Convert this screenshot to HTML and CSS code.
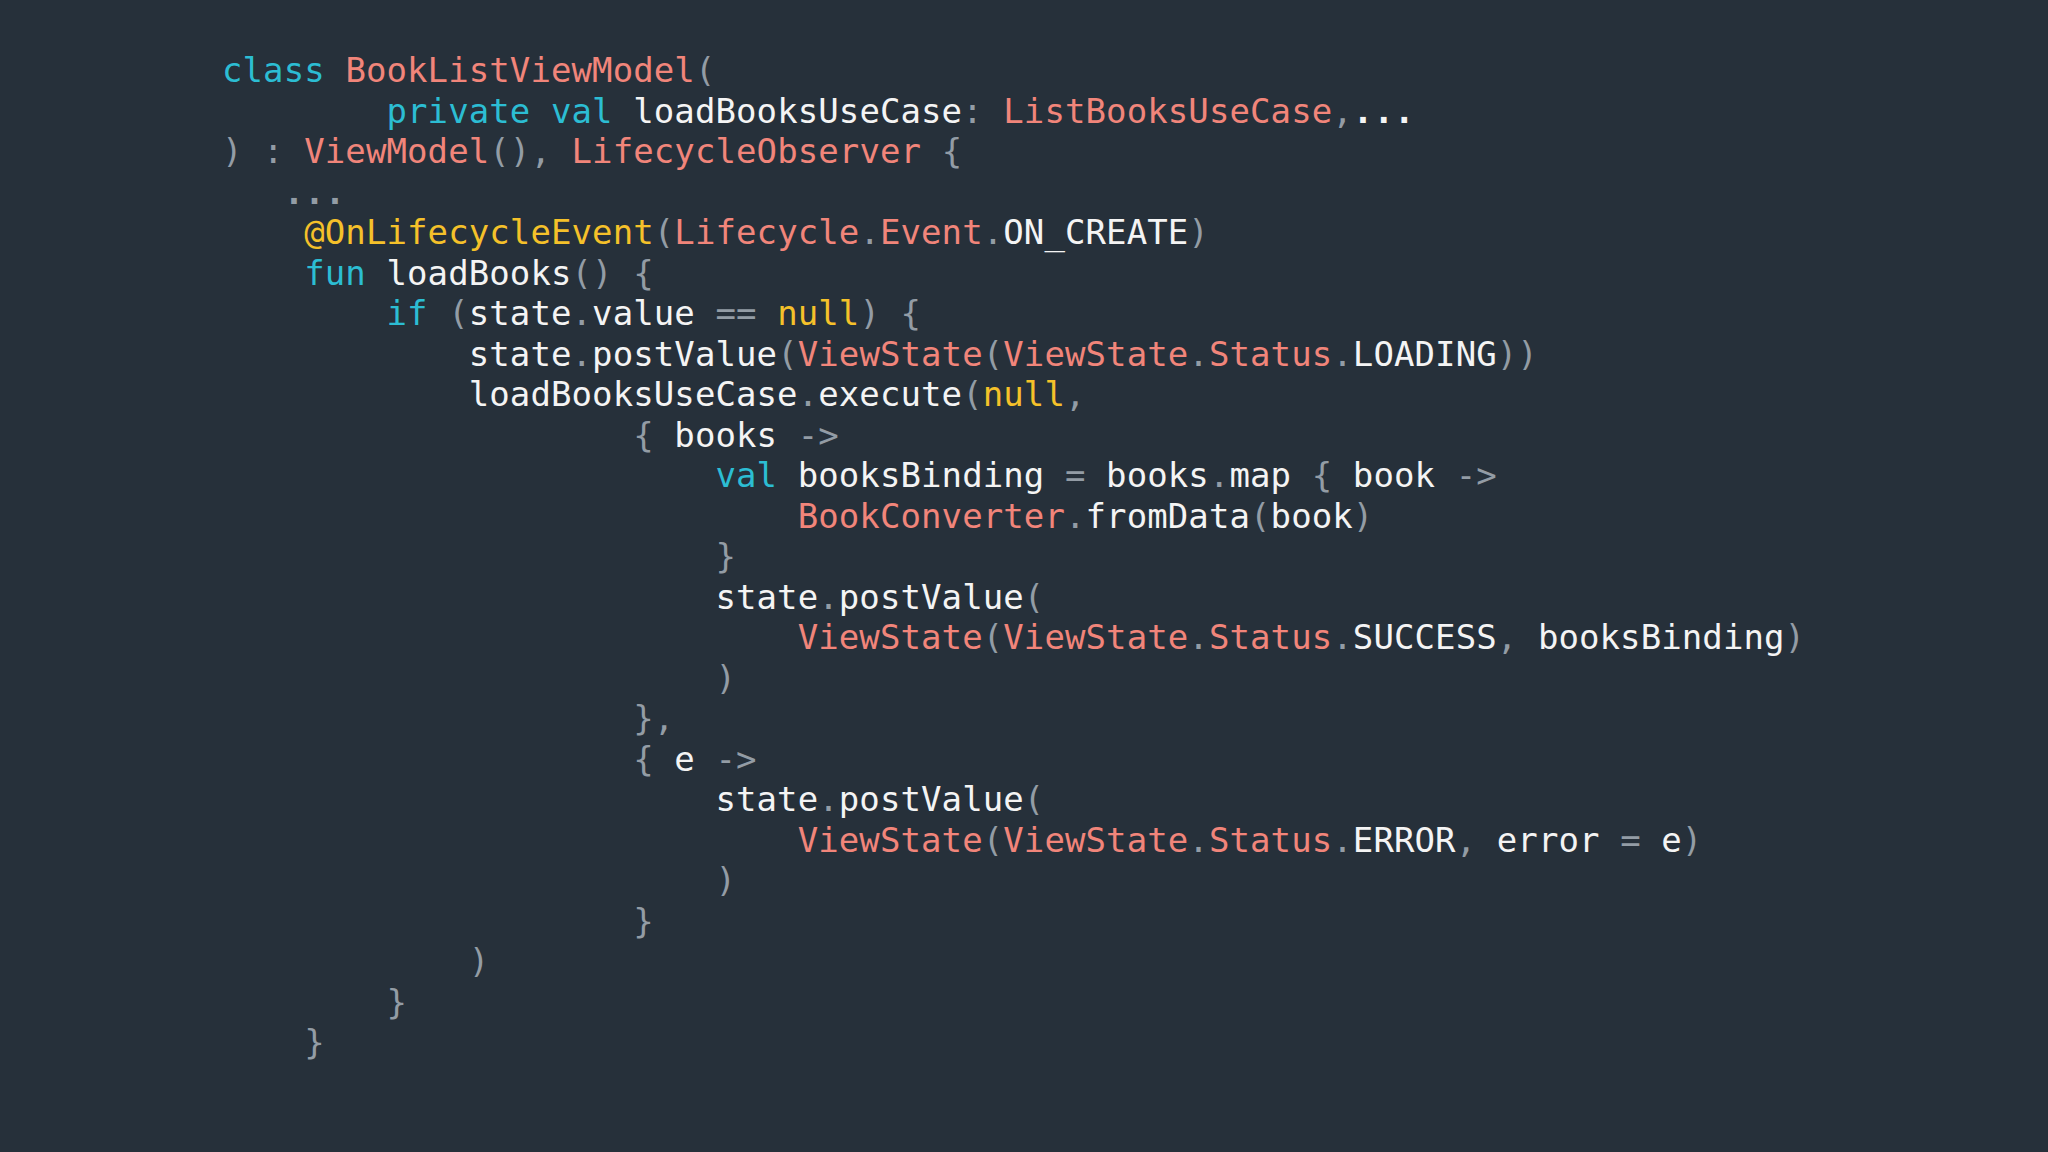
FILE: index.html
```html
<!DOCTYPE html>
<html>
<head>
<meta charset="utf-8">
<link rel="stylesheet" href="styles.css">
</head>
<body>
<pre class="code"><span class="k">class</span> <span class="t">BookListViewModel</span><span class="p">(</span>
        <span class="k">private val</span> <span class="w">loadBooksUseCase</span><span class="p">:</span> <span class="t">ListBooksUseCase</span><span class="p">,</span><span class="w dots">...</span>
<span class="p">) :</span> <span class="t">ViewModel</span><span class="p">(),</span> <span class="t">LifecycleObserver</span> <span class="p">{</span>
<span class="p">   <span class="dots">...</span></span>
    <span class="y">@OnLifecycleEvent</span><span class="p">(</span><span class="t">Lifecycle</span><span class="p">.</span><span class="t">Event</span><span class="p">.</span><span class="w">ON_CREATE</span><span class="p">)</span>
    <span class="k">fun</span> <span class="w">loadBooks</span><span class="p">() {</span>
        <span class="k">if</span> <span class="p">(</span><span class="w">state</span><span class="p">.</span><span class="w">value</span> <span class="p">==</span> <span class="y">null</span><span class="p">) {</span>
            <span class="w">state</span><span class="p">.</span><span class="w">postValue</span><span class="p">(</span><span class="t">ViewState</span><span class="p">(</span><span class="t">ViewState</span><span class="p">.</span><span class="t">Status</span><span class="p">.</span><span class="w">LOADING</span><span class="p">))</span>
            <span class="w">loadBooksUseCase</span><span class="p">.</span><span class="w">execute</span><span class="p">(</span><span class="y">null</span><span class="p">,</span>
                    <span class="p">{</span> <span class="w">books</span> <span class="p">-&gt;</span>
                        <span class="k">val</span> <span class="w">booksBinding</span> <span class="p">=</span> <span class="w">books</span><span class="p">.</span><span class="w">map</span> <span class="p">{</span> <span class="w">book</span> <span class="p">-&gt;</span>
                            <span class="t">BookConverter</span><span class="p">.</span><span class="w">fromData</span><span class="p">(</span><span class="w">book</span><span class="p">)</span>
                        <span class="p">}</span>
                        <span class="w">state</span><span class="p">.</span><span class="w">postValue</span><span class="p">(</span>
                            <span class="t">ViewState</span><span class="p">(</span><span class="t">ViewState</span><span class="p">.</span><span class="t">Status</span><span class="p">.</span><span class="w">SUCCESS</span><span class="p">,</span> <span class="w">booksBinding</span><span class="p">)</span>
                        <span class="p">)</span>
                    <span class="p">},</span>
                    <span class="p">{</span> <span class="w">e</span> <span class="p">-&gt;</span>
                        <span class="w">state</span><span class="p">.</span><span class="w">postValue</span><span class="p">(</span>
                            <span class="t">ViewState</span><span class="p">(</span><span class="t">ViewState</span><span class="p">.</span><span class="t">Status</span><span class="p">.</span><span class="w">ERROR</span><span class="p">,</span> <span class="w">error</span> <span class="p">=</span> <span class="w">e</span><span class="p">)</span>
                        <span class="p">)</span>
                    <span class="p">}</span>
            <span class="p">)</span>
        <span class="p">}</span>
    <span class="p">}</span></pre>
</body>
</html>
```
FILE: styles.css
```css
html, body {
  margin: 0;
  padding: 0;
  background: #26303a;
  width: 2048px;
  height: 1152px;
  overflow: hidden;
}
.code {
  margin: 0;
  padding: 50px 0 0 222px;
  font-family: "DejaVu Sans Mono", monospace;
  font-size: 34px;
  line-height: 40.5px;
  letter-spacing: 0.09px;
  color: #f4f4f4;
}
.k { color: #2cbdd3; }
.t { color: #f1857a; }
.y { color: #f5c12a; }
.p { color: #939ca5; }
.w { color: #f4f4f4; }
.dots { font-weight: bold; }
```
